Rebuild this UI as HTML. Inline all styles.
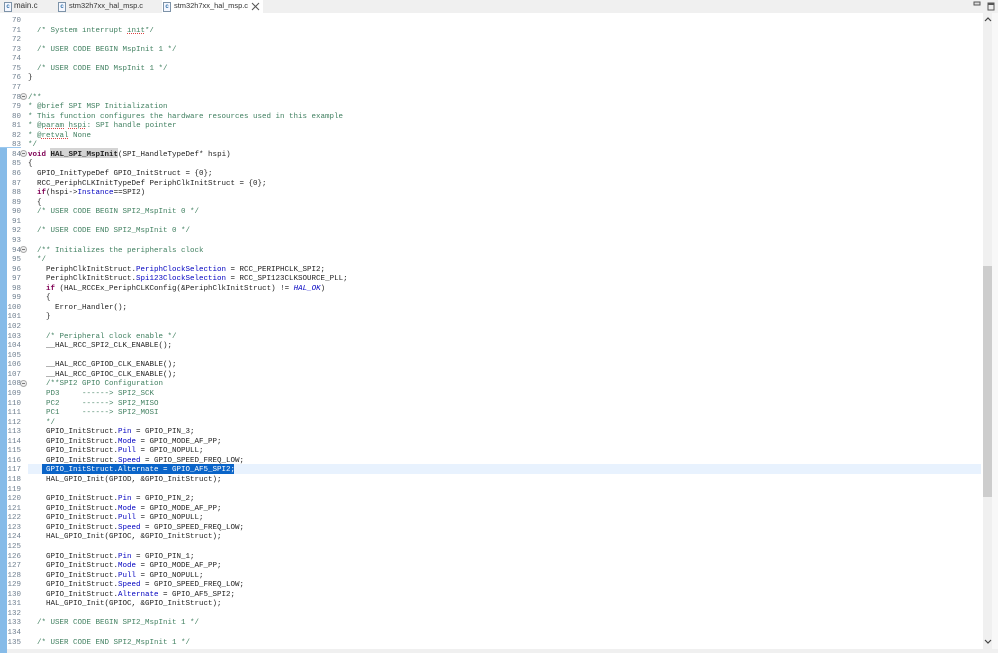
<!DOCTYPE html>
<html><head><meta charset="utf-8"><style>
html,body{margin:0;padding:0;width:998px;height:653px;overflow:hidden;background:#fff}
.a{position:absolute}
pre{margin:0;font:7.5px/9.57px "Liberation Mono",monospace;position:absolute;color:#1c1c1c}
#code{left:28px;top:17px;filter:blur(.25px)}
#nums{left:0;top:17px;width:21px;text-align:right;color:#6f7f8f;filter:blur(.25px)}
#code i{font-style:normal;color:#3f7f5f}
#code b{color:#7f0055}
#code u{text-decoration:none;color:#0000c0}
#code s{text-decoration:underline dotted #d44;color:inherit}
#code .h{font-weight:bold;color:#222}
#code .sel{color:#fff}
.tab{position:absolute;top:1px;font:7.45px/10px "Liberation Sans",sans-serif;color:#333;white-space:pre}
.ic{position:absolute;top:2px;width:6px;height:8px;border:1px solid #7d93a8;background:#f4f7ff;font:bold 6px/8px "Liberation Sans",sans-serif;color:#2f6fa8;text-align:center}
.fold{position:absolute;left:20px;width:5px;height:5px;border:1px solid #aaa;border-radius:50%;background:#eee}
.fold:after{content:"";position:absolute;left:1px;top:2px;width:3px;height:1px;background:#777}
</style></head><body>
<div class="a" style="left:0;top:0;width:998px;height:13px;background:#f0f0f0"></div>
<div class="a" style="left:162px;top:0;width:101px;height:14px;background:#fff"></div>
<div class="ic" style="left:4px">c</div><div class="tab" style="left:14px;font-size:8px">main.c</div>
<div class="ic" style="left:58px">c</div><div class="tab" style="left:69px">stm32h7xx_hal_msp.c</div>
<div class="ic" style="left:163px">c</div><div class="tab" style="left:174px">stm32h7xx_hal_msp.c</div>
<svg class="a" style="left:251px;top:2px" width="9" height="9"><path d="M1 1L8 8M8 1L1 8" stroke="#555" fill="none"/></svg>
<svg class="a" style="left:970px;top:0" width="28" height="14"><rect x="4" y="2" width="6" height="3" fill="#ddd" stroke="#555"/><rect x="18" y="3" width="6" height="7" fill="#eee" stroke="#555"/><rect x="18" y="3" width="6" height="2" fill="#555"/></svg>
<div class="a" style="left:0;top:147px;width:7px;height:506px;background:#86bbe8"></div>
<div class="a" style="left:0;top:147px;width:21px;height:1px;background:#9cc8ee"></div>
<div class="a" style="left:28px;top:464px;width:953px;height:10px;background:#e8f2fe"></div>
<div class="a" style="left:42px;top:464px;width:192px;height:10px;background:#0a64c8"></div>
<div class="a" style="left:50px;top:148px;width:68px;height:10px;background:#d4d4d4"></div>
<div class="a" style="left:983px;top:13px;width:9px;height:636px;background:#f0f0f0"></div>
<div class="a" style="left:983px;top:266px;width:9px;height:231px;background:#cdcdcd"></div>
<div class="a" style="left:992px;top:13px;width:6px;height:640px;background:#f8f8f8"></div>
<div class="a" style="left:0;top:649px;width:998px;height:4px;background:#f0f0f0"></div>
<div class="a" style="left:0;top:649px;width:7px;height:4px;background:#86bbe8"></div>
<svg class="a" style="left:984px;top:16px" width="8" height="6"><path d="M1 5L4 2L7 5" stroke="#444" stroke-width="1.2" fill="none"/></svg>
<svg class="a" style="left:984px;top:639px" width="8" height="6"><path d="M1 1L4 4L7 1" stroke="#444" stroke-width="1.2" fill="none"/></svg>
<div class="fold" style="top:93px"></div>
<div class="fold" style="top:150px"></div>
<div class="fold" style="top:246px"></div>
<div class="fold" style="top:380px"></div>
<pre id="nums">70
71
72
73
74
75
76
77
78
79
80
81
82
83
84
85
86
87
88
89
90
91
92
93
94
95
96
97
98
99
100
101
102
103
104
105
106
107
108
109
110
111
112
113
114
115
116
117
118
119
120
121
122
123
124
125
126
127
128
129
130
131
132
133
134
135</pre>
<pre id="code">

  <i>/* System interrupt <s>init</s>*/</i>

  <i>/* USER CODE BEGIN MspInit 1 */</i>

  <i>/* USER CODE END MspInit 1 */</i>
}

<i>/**</i>
<i>* @brief SPI MSP Initialization</i>
<i>* This function configures the hardware resources used in this example</i>
<i>* @<s>param</s> <s>hspi</s>: SPI handle pointer</i>
<i>* @<s>retval</s> None</i>
<i>*/</i>
<b>void</b> <span class="h">HAL_SPI_MspInit</span>(SPI_HandleTypeDef* hspi)
{
  GPIO_InitTypeDef GPIO_InitStruct = {0};
  RCC_PeriphCLKInitTypeDef PeriphClkInitStruct = {0};
  <b>if</b>(hspi-&gt;<u>Instance</u>==SPI2)
  {
  <i>/* USER CODE BEGIN SPI2_MspInit 0 */</i>

  <i>/* USER CODE END SPI2_MspInit 0 */</i>

  <i>/** Initializes the peripherals clock</i>
  <i>*/</i>
    PeriphClkInitStruct.<u>PeriphClockSelection</u> = RCC_PERIPHCLK_SPI2;
    PeriphClkInitStruct.<u>Spi123ClockSelection</u> = RCC_SPI123CLKSOURCE_PLL;
    <b>if</b> (HAL_RCCEx_PeriphCLKConfig(&amp;PeriphClkInitStruct) != <u style="font-style:italic">HAL_OK</u>)
    {
      Error_Handler();
    }

    <i>/* Peripheral clock enable */</i>
    __HAL_RCC_SPI2_CLK_ENABLE();

    __HAL_RCC_GPIOD_CLK_ENABLE();
    __HAL_RCC_GPIOC_CLK_ENABLE();
    <i>/**SPI2 GPIO Configuration</i>
    <i>PD3     ------&gt; SPI2_SCK</i>
    <i>PC2     ------&gt; SPI2_MISO</i>
    <i>PC1     ------&gt; SPI2_MOSI</i>
    <i>*/</i>
    GPIO_InitStruct.<u>Pin</u> = GPIO_PIN_3;
    GPIO_InitStruct.<u>Mode</u> = GPIO_MODE_AF_PP;
    GPIO_InitStruct.<u>Pull</u> = GPIO_NOPULL;
    GPIO_InitStruct.<u>Speed</u> = GPIO_SPEED_FREQ_LOW;
    <span class="sel">GPIO_InitStruct.Alternate = GPIO_AF5_SPI2;</span>
    HAL_GPIO_Init(GPIOD, &amp;GPIO_InitStruct);

    GPIO_InitStruct.<u>Pin</u> = GPIO_PIN_2;
    GPIO_InitStruct.<u>Mode</u> = GPIO_MODE_AF_PP;
    GPIO_InitStruct.<u>Pull</u> = GPIO_NOPULL;
    GPIO_InitStruct.<u>Speed</u> = GPIO_SPEED_FREQ_LOW;
    HAL_GPIO_Init(GPIOC, &amp;GPIO_InitStruct);

    GPIO_InitStruct.<u>Pin</u> = GPIO_PIN_1;
    GPIO_InitStruct.<u>Mode</u> = GPIO_MODE_AF_PP;
    GPIO_InitStruct.<u>Pull</u> = GPIO_NOPULL;
    GPIO_InitStruct.<u>Speed</u> = GPIO_SPEED_FREQ_LOW;
    GPIO_InitStruct.<u>Alternate</u> = GPIO_AF5_SPI2;
    HAL_GPIO_Init(GPIOC, &amp;GPIO_InitStruct);

  <i>/* USER CODE BEGIN SPI2_MspInit 1 */</i>

  <i>/* USER CODE END SPI2_MspInit 1 */</i></pre>
</body></html>
